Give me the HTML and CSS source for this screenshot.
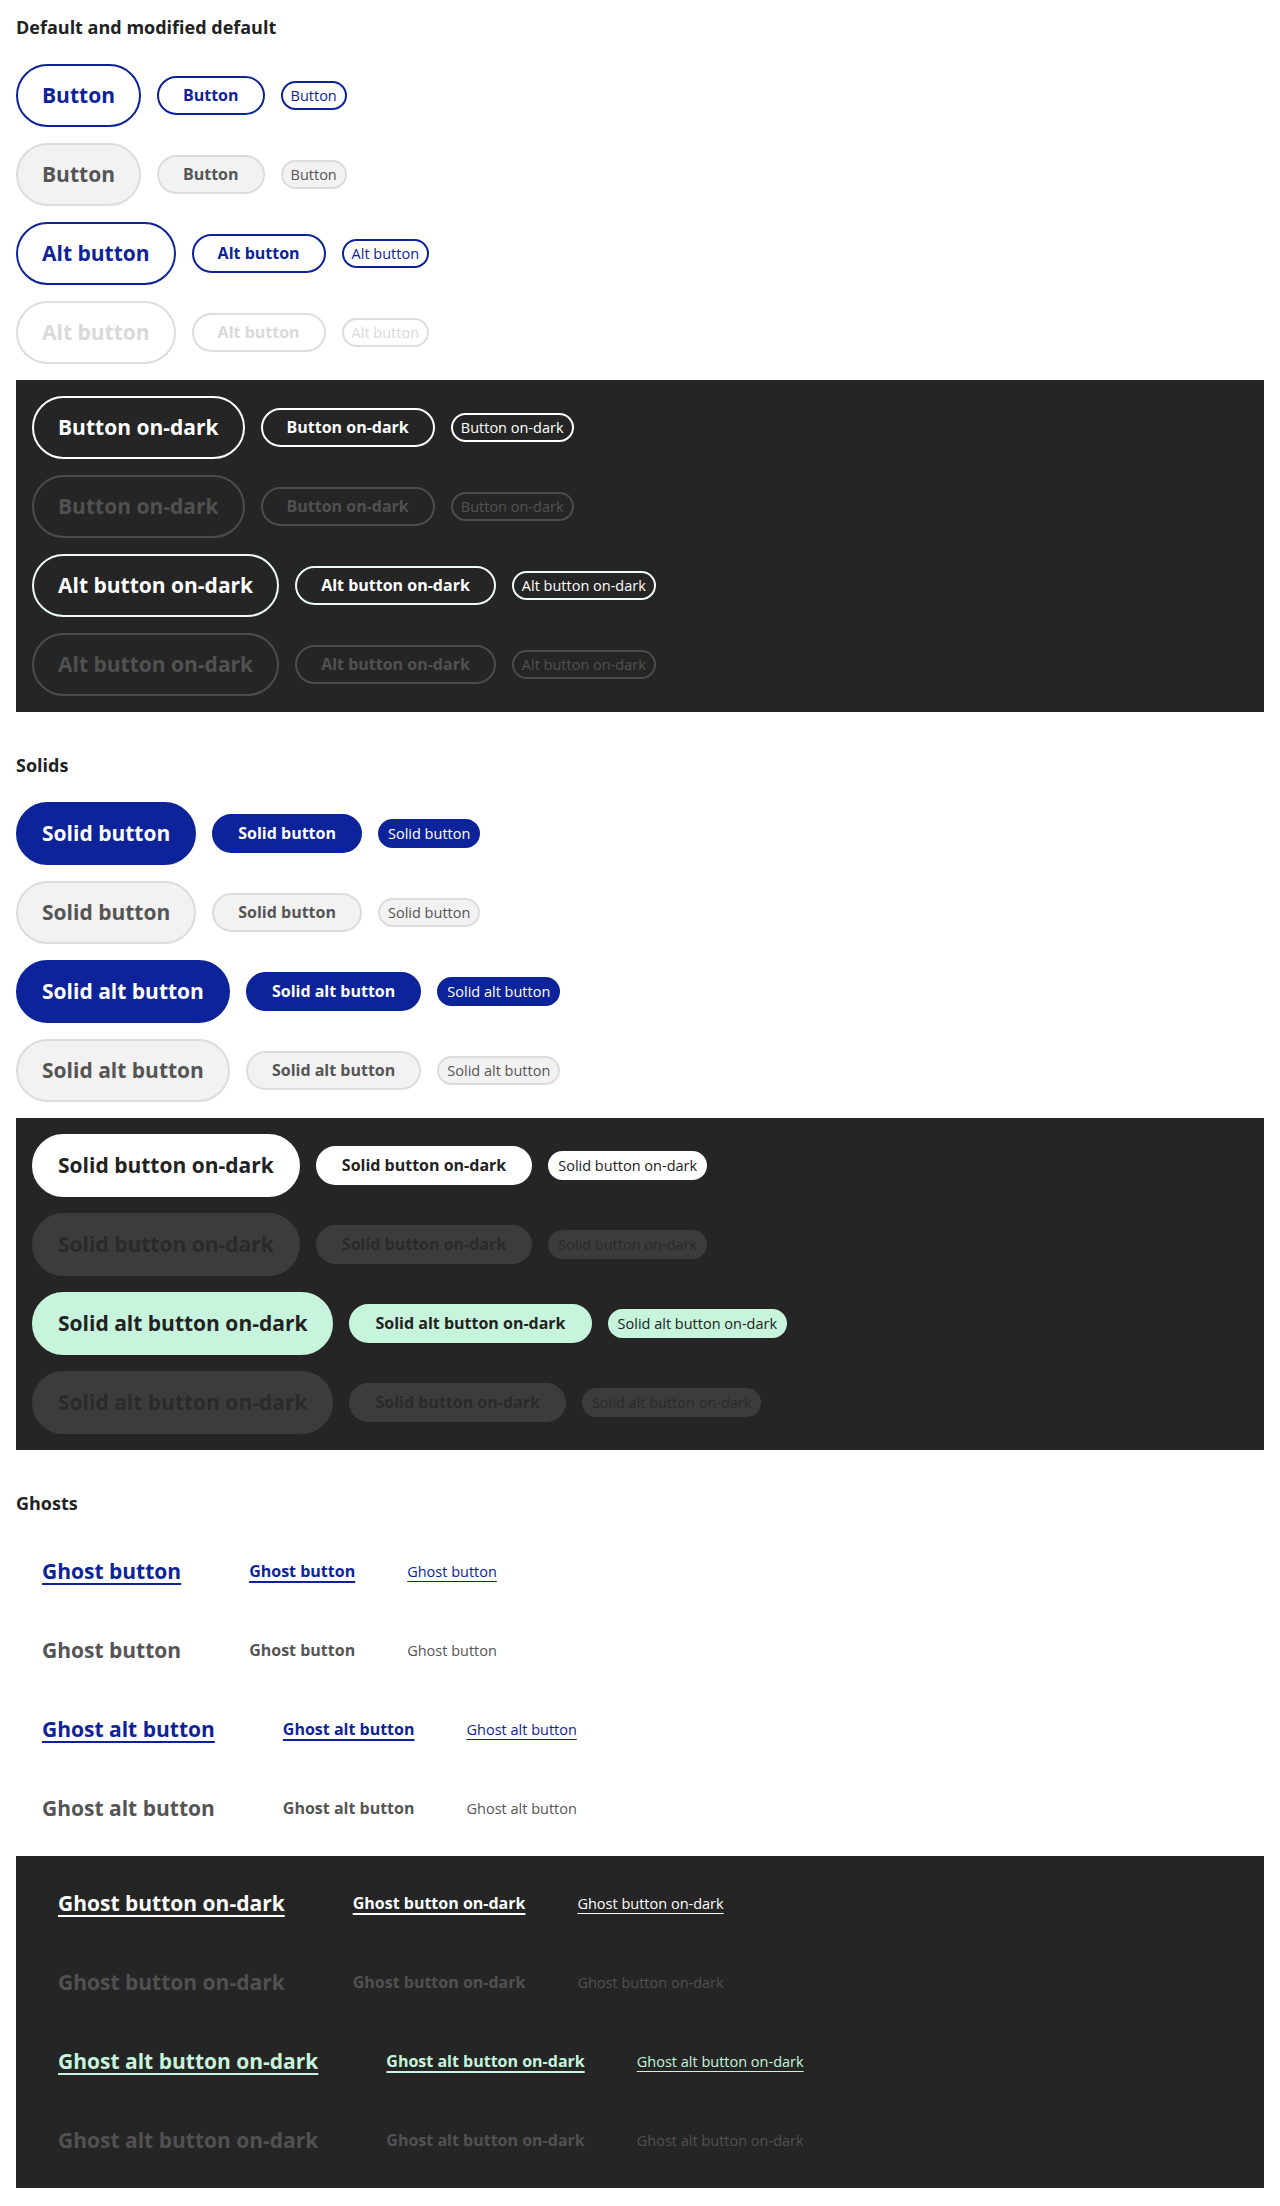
FILE: index.html
```html
<!DOCTYPE html>
<html lang="en">
<head>
<meta charset="utf-8">
<title>Buttons</title>
<link rel="stylesheet" href="styles.css">
</head>
<body>
<main class="page">
  <section class="section">
    <h2 class="title">Default and modified default</h2>
    <div class="rows">
      <div class="row">
        <button class="btn lg outline">Button</button>
        <button class="btn md outline">Button</button>
        <button class="btn sm outline">Button</button>
      </div>
      <div class="row">
        <button class="btn lg muted">Button</button>
        <button class="btn md muted">Button</button>
        <button class="btn sm muted">Button</button>
      </div>
      <div class="row">
        <button class="btn lg outline">Alt button</button>
        <button class="btn md outline">Alt button</button>
        <button class="btn sm outline">Alt button</button>
      </div>
      <div class="row">
        <button class="btn lg faint">Alt button</button>
        <button class="btn md faint">Alt button</button>
        <button class="btn sm faint">Alt button</button>
      </div>
    </div>
    <div class="dark rows">
      <div class="row">
        <button class="btn lg dk-outline">Button on-dark</button>
        <button class="btn md dk-outline">Button on-dark</button>
        <button class="btn sm dk-outline">Button on-dark</button>
      </div>
      <div class="row">
        <button class="btn lg dk-off">Button on-dark</button>
        <button class="btn md dk-off">Button on-dark</button>
        <button class="btn sm dk-off">Button on-dark</button>
      </div>
      <div class="row">
        <button class="btn lg dk-outline-alt">Alt button on-dark</button>
        <button class="btn md dk-outline-alt">Alt button on-dark</button>
        <button class="btn sm dk-outline-alt">Alt button on-dark</button>
      </div>
      <div class="row">
        <button class="btn lg dk-off">Alt button on-dark</button>
        <button class="btn md dk-off">Alt button on-dark</button>
        <button class="btn sm dk-off">Alt button on-dark</button>
      </div>
    </div>
  </section>

  <section class="section">
    <h2 class="title">Solids</h2>
    <div class="rows">
      <div class="row">
        <button class="btn lg solid">Solid button</button>
        <button class="btn md solid">Solid button</button>
        <button class="btn sm solid">Solid button</button>
      </div>
      <div class="row">
        <button class="btn lg muted">Solid button</button>
        <button class="btn md muted">Solid button</button>
        <button class="btn sm muted">Solid button</button>
      </div>
      <div class="row">
        <button class="btn lg solid">Solid alt button</button>
        <button class="btn md solid">Solid alt button</button>
        <button class="btn sm solid">Solid alt button</button>
      </div>
      <div class="row">
        <button class="btn lg muted">Solid alt button</button>
        <button class="btn md muted">Solid alt button</button>
        <button class="btn sm muted">Solid alt button</button>
      </div>
    </div>
    <div class="dark rows">
      <div class="row">
        <button class="btn lg dk-solid">Solid button on-dark</button>
        <button class="btn md dk-solid">Solid button on-dark</button>
        <button class="btn sm dk-solid">Solid button on-dark</button>
      </div>
      <div class="row">
        <button class="btn lg dk-solid-off">Solid button on-dark</button>
        <button class="btn md dk-solid-off">Solid button on-dark</button>
        <button class="btn sm dk-solid-off">Solid button on-dark</button>
      </div>
      <div class="row">
        <button class="btn lg dk-mint">Solid alt button on-dark</button>
        <button class="btn md dk-mint">Solid alt button on-dark</button>
        <button class="btn sm dk-mint">Solid alt button on-dark</button>
      </div>
      <div class="row">
        <button class="btn lg dk-solid-off">Solid alt button on-dark</button>
        <button class="btn md dk-solid-off">Solid button on-dark</button>
        <button class="btn sm dk-solid-off">Solid alt button on-dark</button>
      </div>
    </div>
  </section>

  <section class="section">
    <h2 class="title">Ghosts</h2>
    <div class="rows">
      <div class="row">
        <button class="btn lg ghost">Ghost button</button>
        <button class="btn md ghost">Ghost button</button>
        <button class="btn sm ghost">Ghost button</button>
      </div>
      <div class="row">
        <button class="btn lg ghost-off">Ghost button</button>
        <button class="btn md ghost-off">Ghost button</button>
        <button class="btn sm ghost-off">Ghost button</button>
      </div>
      <div class="row">
        <button class="btn lg ghost">Ghost alt button</button>
        <button class="btn md ghost">Ghost alt button</button>
        <button class="btn sm ghost">Ghost alt button</button>
      </div>
      <div class="row">
        <button class="btn lg ghost-off">Ghost alt button</button>
        <button class="btn md ghost-off">Ghost alt button</button>
        <button class="btn sm ghost-off">Ghost alt button</button>
      </div>
    </div>
    <div class="dark rows">
      <div class="row">
        <button class="btn lg ghost-dk">Ghost button on-dark</button>
        <button class="btn md ghost-dk">Ghost button on-dark</button>
        <button class="btn sm ghost-dk">Ghost button on-dark</button>
      </div>
      <div class="row">
        <button class="btn lg ghost-dk-off">Ghost button on-dark</button>
        <button class="btn md ghost-dk-off">Ghost button on-dark</button>
        <button class="btn sm ghost-dk-off">Ghost button on-dark</button>
      </div>
      <div class="row">
        <button class="btn lg ghost-mint">Ghost alt button on-dark</button>
        <button class="btn md ghost-mint">Ghost alt button on-dark</button>
        <button class="btn sm ghost-mint">Ghost alt button on-dark</button>
      </div>
      <div class="row">
        <button class="btn lg ghost-dk-off">Ghost alt button on-dark</button>
        <button class="btn md ghost-dk-off">Ghost alt button on-dark</button>
        <button class="btn sm ghost-dk-off">Ghost alt button on-dark</button>
      </div>
    </div>
  </section>
</main>
</body>
</html>
```
FILE: styles.css
```css
* { box-sizing: border-box; }

body {
  margin: 0;
  background: #ffffff;
  font-family: "Open Sans", "Liberation Sans", sans-serif;
  color: #222222;
}

.page {
  padding: 15px 16px 16px;
}

.section + .section .title {
  margin-top: 41px;
}

.title {
  margin: 0 0 25px;
  font-size: 18px;
  line-height: 24px;
  font-weight: 700;
  color: #222222;
}

.rows {
  display: flex;
  flex-direction: column;
  gap: 16px;
}

.row {
  display: flex;
  align-items: center;
  gap: 16px;
}

.dark {
  margin-top: 16px;
  padding: 16px;
  background: #252525;
}

.btn {
  margin: 0;
  font-family: "Open Sans", "Liberation Sans", sans-serif;
  border: 2px solid transparent;
  border-radius: 999px;
  background: transparent;
  white-space: nowrap;
  cursor: pointer;
}

.lg {
  font-size: 21px;
  line-height: 31px;
  font-weight: 700;
  padding: 14px 24px;
}

.md {
  font-size: 16px;
  line-height: 23px;
  font-weight: 700;
  padding: 6px 24px;
}

.sm {
  font-size: 14.5px;
  line-height: 19px;
  font-weight: 400;
  padding: 3px 8px;
}

/* outlines */
.outline {
  background: #ffffff;
  border-color: #0d2399;
  color: #0d2399;
}

.muted {
  background: #f2f2f2;
  border-color: #dcdcdc;
  color: #555555;
}

.faint {
  background: #ffffff;
  border-color: #dddddd;
  color: #d9d9d9;
}

.dk-outline {
  border-color: #ffffff;
  color: #ffffff;
}

.dk-outline-alt {
  border-color: #eefaf3;
  color: #ffffff;
}

.dk-off {
  border-color: #4c4c4c;
  color: #515151;
}

/* solids */
.solid {
  background: #0d2399;
  border-color: #0d2399;
  color: #ffffff;
}

.dk-solid {
  background: #ffffff;
  border-color: #ffffff;
  color: #222222;
}

.dk-solid-off {
  background: #3c3c3c;
  border-color: #3c3c3c;
  color: #2a2a2a;
}

.dk-mint {
  background: #c6f4dc;
  border-color: #c6f4dc;
  color: #222222;
}

/* ghosts */
.ghost,
.ghost-dk,
.ghost-mint {
  text-decoration: underline;
  text-underline-offset: 4px;
  text-decoration-thickness: 2px;
}

.sm.ghost,
.sm.ghost-dk,
.sm.ghost-mint {
  text-underline-offset: 4px;
  text-decoration-thickness: 1px;
}

.ghost { color: #0d2399; }
.ghost-off { color: #555555; }
.ghost-dk { color: #ffffff; }
.ghost-dk-off { color: #515151; }
.ghost-mint { color: #c6f4dc; }
```
